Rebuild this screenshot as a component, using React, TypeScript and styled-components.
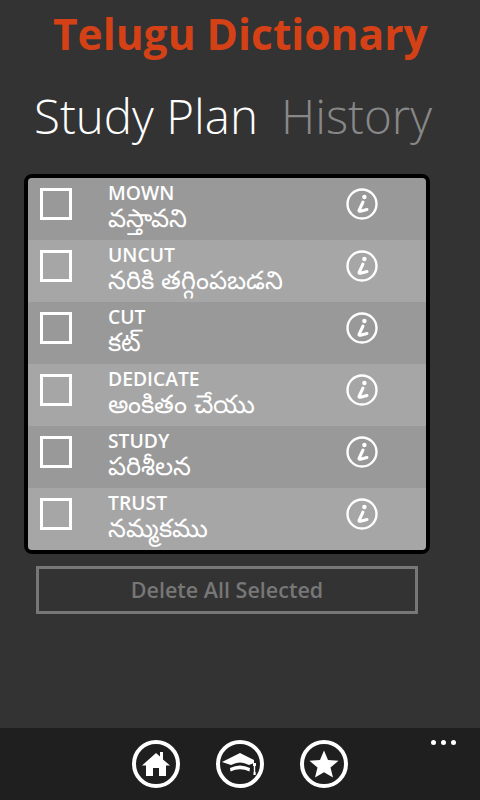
import * as React from 'react'
import styled, { createGlobalStyle } from 'styled-components'

const GlobalStyle = createGlobalStyle`
	html, body {
		margin: 0;
		padding: 0;
		background-color: #333333;
	}
`

const Page = styled.div`
	width: 480px;
	height: 800px;
	background-color: #333333;
	color: #ffffff;
	font-family: 'Open Sans', 'Noto Sans', sans-serif;
	display: flex;
	flex-direction: column;
	overflow: hidden;
`

const Title = styled.h1`
	margin: 0;
	padding: 8px 0 0 53px;
	height: 52px;
	line-height: 52px;
	font-size: 42.5px;
	font-weight: 700;
	color: #d54116;
	white-space: nowrap;
`

const Tabs = styled.div`
	display: flex;
	gap: 23px;
	padding: 23px 0 0 34px;
	height: 66px;
`

const Tab = styled.div<{ $active?: boolean }>`
	font-size: 47.5px;
	line-height: 66px;
	font-weight: 300;
	color: ${p => (p.$active ? '#ffffff' : '#888888')};
	white-space: nowrap;
`

const Panel = styled.div`
	width: 398px;
	margin: 25px 0 0 24px;
	border: 4px solid #000000;
	border-radius: 8px;
	overflow: hidden;
`

const Row = styled.div<{ $odd: boolean }>`
	height: 62px;
	display: flex;
	align-items: flex-start;
	background-color: ${p => (p.$odd ? '#a6a6a6' : '#999999')};
`

const CheckBox = styled.div`
	width: 26px;
	height: 26px;
	border: 3px solid #ffffff;
	margin: 10px 36px 0 12px;
	flex-shrink: 0;
`

const Words = styled.div`
	width: 238px;
	flex-shrink: 0;
	padding-top: 3px;
`

const English = styled.div`
	font-size: 19.3px;
	font-weight: 600;
	line-height: 24px;
`

const Telugu = styled.div`
	font-size: 25.5px;
	line-height: 24px;
	font-weight: 500;
	white-space: nowrap;
`

const InfoIcon = styled.svg`
	width: 32px;
	height: 32px;
	margin-top: 10px;
`

const DeleteButton = styled.button`
	width: 382px;
	height: 48px;
	margin: 12px 0 0 36px;
	padding: 0 0 2px;
	background-color: transparent;
	border: 3px solid #777777;
	color: #777777;
	font-family: inherit;
	font-size: 21.5px;
	font-weight: 600;
`

const AppBar = styled.div`
	position: relative;
	margin-top: auto;
	height: 72px;
	background-color: #1f1f1f;
	display: flex;
	justify-content: center;
	gap: 36px;
	padding-top: 12px;
	box-sizing: border-box;
`

const RoundButton = styled.svg`
	width: 48px;
	height: 48px;
`

const Dots = styled.div`
	position: absolute;
	top: 12px;
	left: 431px;
	display: flex;
	gap: 5px;
`

const Dot = styled.span`
	width: 5px;
	height: 5px;
	border-radius: 50%;
	background-color: #ffffff;
`

const words = [
	{ en: 'MOWN', te: 'వస్తావని' },
	{ en: 'UNCUT', te: 'నరికి తగ్గింపబడని' },
	{ en: 'CUT', te: 'కట్' },
	{ en: 'DEDICATE', te: 'అంకితం చేయు' },
	{ en: 'STUDY', te: 'పరిశీలన' },
	{ en: 'TRUST', te: 'నమ్మకము' },
]

const Info = () => (
	<InfoIcon viewBox="0 0 32 32">
		<circle cx="16" cy="16" r="14.5" fill="none" stroke="#fff" strokeWidth="2.4" />
		<circle cx="18.4" cy="9" r="2.2" fill="#fff" />
		<path
			d="M17 14 L13 22.5 Q12.8 23.6 14.5 23.2 L21 21.5"
			fill="none"
			stroke="#fff"
			strokeWidth="3"
			strokeLinecap="round"
			strokeLinejoin="round"
		/>
	</InfoIcon>
)

const Ring = () => <circle cx="24" cy="24" r="22" fill="none" stroke="#fff" strokeWidth="4" />

export default function App() {
	return (
		<Page>
			<GlobalStyle />
			<Title>Telugu Dictionary</Title>
			<Tabs>
				<Tab $active>Study Plan</Tab>
				<Tab>History</Tab>
			</Tabs>
			<Panel>
				{words.map((w, i) => (
					<Row key={w.en} $odd={i % 2 === 1}>
						<CheckBox />
						<Words>
							<English>{w.en}</English>
							<Telugu>{w.te}</Telugu>
						</Words>
						<Info />
					</Row>
				))}
			</Panel>
			<DeleteButton>Delete All Selected</DeleteButton>
			<AppBar>
				<RoundButton viewBox="0 0 48 48">
					<Ring />
					<path
						d="M24 13 L28 16.5 V12 H31 V19.5 L38 25.5 H34 V36 H27 V28 H21 V36 H14 V25.5 H10 Z"
						fill="#fff"
					/>
				</RoundButton>
				<RoundButton viewBox="0 0 48 48">
					<Ring />
					<path d="M6 22 L24 13 L38 20 L38 23 L33 25 Q24 20 15 25 Z" fill="#fff" />
					<path d="M14 28 Q24 23 34 28 L33.5 31.5 Q24 27 14.5 31.5 Z" fill="#fff" />
					<path d="M38.5 23 V35" stroke="#fff" strokeWidth="1.4" />
					<rect x="37" y="23" width="3" height="3" fill="#fff" />
					<rect x="37.6" y="32" width="2" height="3" fill="#fff" />
				</RoundButton>
				<RoundButton viewBox="0 0 48 48">
					<Ring />
					<path
						d="M24 10.5 L28 20 L38.5 20.8 L30.5 27.5 L33 37.5 L24 32.2 L15 37.5 L17.5 27.5 L9.5 20.8 L20 20 Z"
						fill="#fff"
					/>
				</RoundButton>
				<Dots>
					<Dot />
					<Dot />
					<Dot />
				</Dots>
			</AppBar>
		</Page>
	)
}
